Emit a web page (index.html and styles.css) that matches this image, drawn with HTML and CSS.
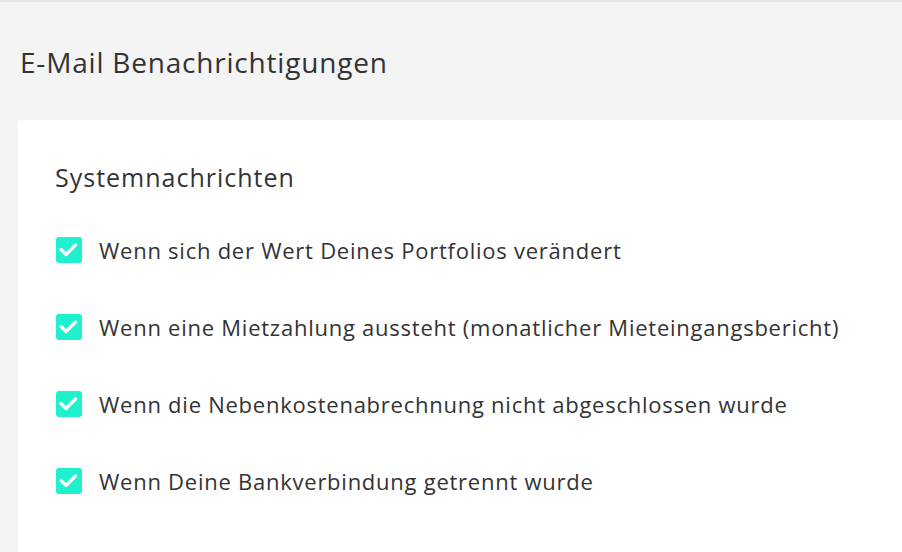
FILE: index.html
```html
<!DOCTYPE html>
<html lang="de">
<head>
    <meta charset="UTF-8">
    <title>E-Mail Benachrichtigungen</title>
    <link rel="stylesheet" href="styles.css">
</head>
<body>
    <div class="page">
        <h1 class="page-title">E-Mail Benachrichtigungen</h1>

        <section class="card">
            <h2 class="card-title">Systemnachrichten</h2>
            <ul class="options">
                <li class="option">
                    <span class="check"><svg viewBox="0 0 26 26"><path d="M5 12.5l5 5 9.5-9.5"/></svg></span>
                    <span class="label">Wenn sich der Wert Deines Portfolios verändert</span>
                </li>
                <li class="option">
                    <span class="check"><svg viewBox="0 0 26 26"><path d="M5 12.5l5 5 9.5-9.5"/></svg></span>
                    <span class="label">Wenn eine Mietzahlung aussteht (monatlicher Mieteingangsbericht)</span>
                </li>
                <li class="option">
                    <span class="check"><svg viewBox="0 0 26 26"><path d="M5 12.5l5 5 9.5-9.5"/></svg></span>
                    <span class="label">Wenn die Nebenkostenabrechnung nicht abgeschlossen wurde</span>
                </li>
                <li class="option">
                    <span class="check"><svg viewBox="0 0 26 26"><path d="M5 12.5l5 5 9.5-9.5"/></svg></span>
                    <span class="label">Wenn Deine Bankverbindung getrennt wurde</span>
                </li>
            </ul>
        </section>
    </div>
</body>
</html>
```

FILE: styles.css
```css
:root {
    --bg: #f4f4f4;
    --surface: #ffffff;
    --text: #333333;
    --accent: #1ff0cd;
}

* {
    margin: 0;
    padding: 0;
    box-sizing: border-box;
}

html, body {
    height: 100%;
}

body {
    font-family: 'Open Sans', 'Lato', sans-serif;
    background: var(--bg);
    color: var(--text);
    border-top: 2px solid #e6e6e6;
    overflow: hidden;
}

.page {
    padding: 0 0 0 18px;
}

.page-title {
    font-size: 28px;
    font-weight: 400;
    letter-spacing: 0.8px;
    line-height: 34px;
    padding: 43px 0 0 2px;
    height: 118px;
}

.card {
    background: var(--surface);
    border-radius: 4px 0 0 0;
    margin-right: -20px;
    min-height: 440px;
    padding: 42px 0 0 37px;
}

.card-title {
    font-size: 25px;
    font-weight: 400;
    letter-spacing: 1px;
    line-height: 30px;
    margin-bottom: 45px;
}

.options {
    list-style: none;
    display: flex;
    flex-direction: column;
    gap: 51px;
}

.option {
    display: flex;
    align-items: center;
    gap: 17px;
    height: 26px;
}

.check {
    width: 26px;
    height: 26px;
    margin-left: 1px;
    border-radius: 3px;
    background: var(--accent);
    display: flex;
    flex-shrink: 0;
}

.check svg {
    width: 26px;
    height: 26px;
    fill: none;
    stroke: #ffffff;
    stroke-width: 3.2;
    stroke-linecap: round;
    stroke-linejoin: round;
}

.label {
    font-size: 22px;
    letter-spacing: 0.75px;
    line-height: 26px;
}
```
